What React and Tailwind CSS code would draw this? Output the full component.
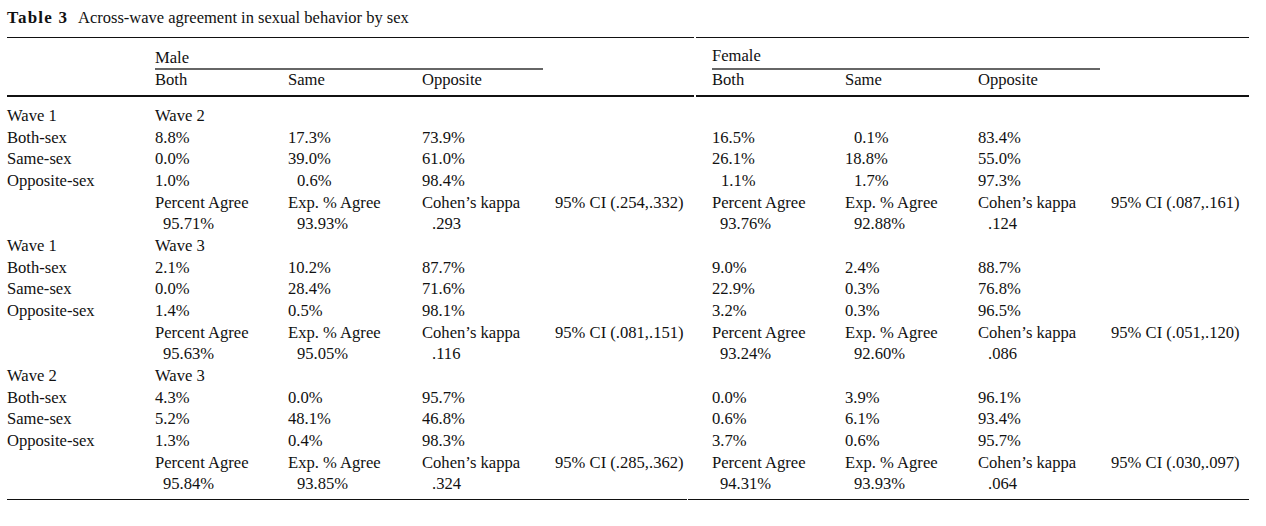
import React from "react";

const cols = "grid grid-cols-[148px_133px_134px_133px_157px_133px_133px_133px_138px]";

// "^" at the start of a value = indented cell
const blocks = [
  {
    waves: ["Wave 1", "Wave 2"],
    rows: [
      ["Both-sex", "8.8%", "17.3%", "73.9%", "16.5%", "^0.1%", "83.4%"],
      ["Same-sex", "0.0%", "39.0%", "61.0%", "26.1%", "18.8%", "55.0%"],
      ["Opposite-sex", "1.0%", "^0.6%", "98.4%", "^1.1%", "^1.7%", "97.3%"],
    ],
    male: ["95.71%", "93.93%", ".293", "95% CI (.254,.332)"],
    female: ["93.76%", "92.88%", ".124", "95% CI (.087,.161)"],
  },
  {
    waves: ["Wave 1", "Wave 3"],
    rows: [
      ["Both-sex", "2.1%", "10.2%", "87.7%", "9.0%", "2.4%", "88.7%"],
      ["Same-sex", "0.0%", "28.4%", "71.6%", "22.9%", "0.3%", "76.8%"],
      ["Opposite-sex", "1.4%", "0.5%", "98.1%", "3.2%", "0.3%", "96.5%"],
    ],
    male: ["95.63%", "95.05%", ".116", "95% CI (.081,.151)"],
    female: ["93.24%", "92.60%", ".086", "95% CI (.051,.120)"],
  },
  {
    waves: ["Wave 2", "Wave 3"],
    rows: [
      ["Both-sex", "4.3%", "0.0%", "95.7%", "0.0%", "3.9%", "96.1%"],
      ["Same-sex", "5.2%", "48.1%", "46.8%", "0.6%", "6.1%", "93.4%"],
      ["Opposite-sex", "1.3%", "0.4%", "98.3%", "3.7%", "0.6%", "95.7%"],
    ],
    male: ["95.84%", "93.85%", ".324", "95% CI (.285,.362)"],
    female: ["94.31%", "93.93%", ".064", "95% CI (.030,.097)"],
  },
];

function Cell({ v }) {
  if (v && v.startsWith("^")) return <div className="pl-[9px]">{v.slice(1)}</div>;
  return <div>{v}</div>;
}

function Block({ b }) {
  return (
    <>
      <div className={cols}>
        <div>{b.waves[0]}</div>
        <div>{b.waves[1]}</div>
      </div>
      {b.rows.map((r, i) => (
        <div key={i} className={cols}>
          <div>{r[0]}</div>
          <Cell v={r[1]} />
          <Cell v={r[2]} />
          <Cell v={r[3]} />
          <div />
          <Cell v={r[4]} />
          <Cell v={r[5]} />
          <Cell v={r[6]} />
        </div>
      ))}
      <div className={cols}>
        <div />
        <div>Percent Agree</div>
        <div>Exp. % Agree</div>
        <div>Cohen’s kappa</div>
        <div>{b.male[3]}</div>
        <div>Percent Agree</div>
        <div>Exp. % Agree</div>
        <div>Cohen’s kappa</div>
        <div>{b.female[3]}</div>
      </div>
      <div className={cols}>
        <div />
        <div className="pl-[8px]">{b.male[0]}</div>
        <div className="pl-[9px]">{b.male[1]}</div>
        <div className="pl-[10px]">{b.male[2]}</div>
        <div />
        <div className="pl-[8px]">{b.female[0]}</div>
        <div className="pl-[9px]">{b.female[1]}</div>
        <div className="pl-[10px]">{b.female[2]}</div>
      </div>
    </>
  );
}

export default function App() {
  return (
    <div className="bg-white w-[1266px] h-[526px] pt-[7px] pl-[7px] text-[#111] font-['Liberation_Serif',serif] text-[16.6px]">
      <div className="w-[1242px]">
        <div className="flex items-baseline leading-[22px] text-[16.5px]">
          <span className="font-bold w-[71px] text-[17px] tracking-[1.2px]">Table 3</span>
          <span>Across-wave agreement in sexual behavior by sex</span>
        </div>

        <div className="flex gap-[2px] mt-[8px]">
          <div className="w-[687px] border-t-[1.5px] border-[#111]" />
          <div className="flex-1 border-t-[1.5px] border-[#111]" />
        </div>

        <div className={cols + " mt-[9px] leading-[21px]"}>
          <div />
          <div className="col-span-3 mr-[12px] border-b-2 border-[#666]">Male</div>
          <div />
          <div className="col-span-3 mr-[11px] border-b-2 border-[#666] -mt-[2px]">Female</div>
        </div>
        <div className={cols + " leading-[19px]"}>
          <div />
          <div>Both</div>
          <div>Same</div>
          <div>Opposite</div>
          <div />
          <div>Both</div>
          <div>Same</div>
          <div>Opposite</div>
        </div>

        <div className="flex gap-[2px] mt-[6px]">
          <div className="w-[687px] border-t-2 border-[#111]" />
          <div className="flex-1 border-t-2 border-[#111]" />
        </div>

        <div className="pt-[8px] leading-[21.65px]">
          {blocks.map((b, i) => (
            <Block key={i} b={b} />
          ))}
        </div>

        <div className="flex gap-[1px] mt-[4px]">
          <div className="w-[680px] border-t-[1.5px] border-[#111]" />
          <div className="flex-1 border-t-[1.5px] border-[#111]" />
        </div>
      </div>
    </div>
  );
}
